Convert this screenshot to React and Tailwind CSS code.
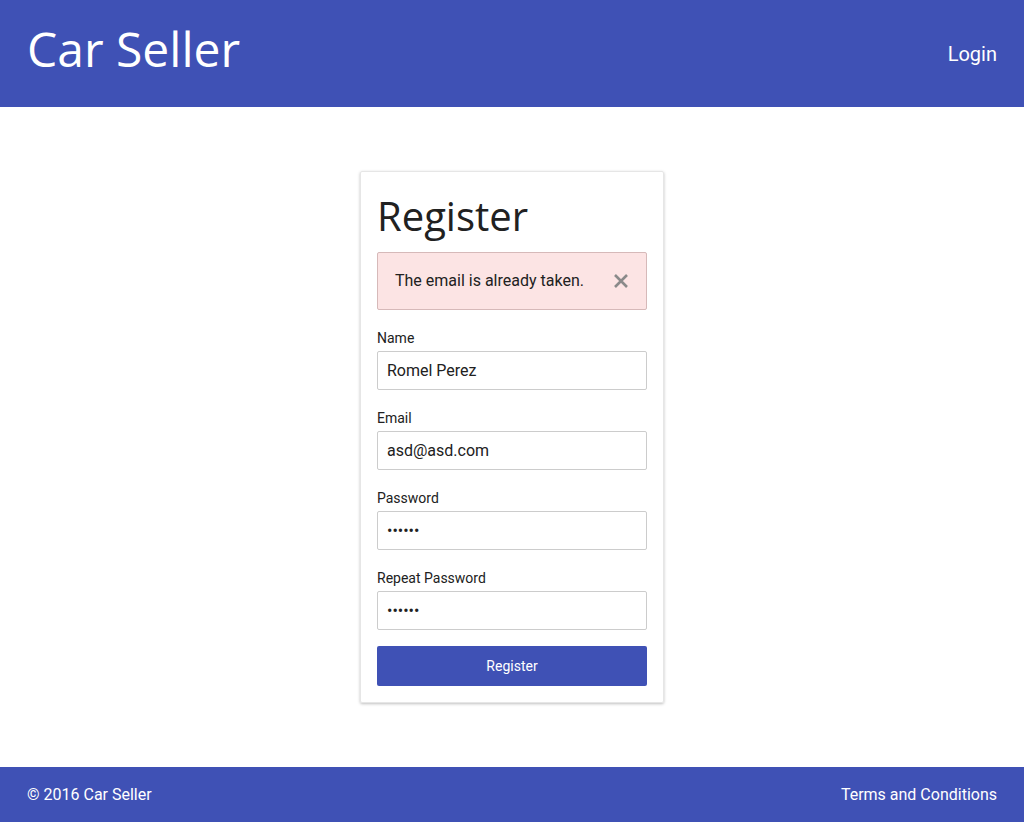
import React from 'react';

const Field = ({ label, type = 'text', value }) => (
  <div className="mt-[20px]">
    <label className="block text-[14px] leading-[16px] text-[#212121]">{label}</label>
    <input
      type={type}
      defaultValue={value}
      readOnly
      className="mt-[5px] block w-full h-[39px] border border-[#cccccc] rounded-[2px] px-[9px] text-[16px] text-[#212121] outline-none bg-white"
    />
  </div>
);

const App = () => {
  return (
    <div className="min-h-screen flex flex-col bg-white font-['Roboto',sans-serif]">
      <header className="h-[107px] bg-[#3f51b5] flex items-center justify-between px-[27px] text-white">
        <h1 className="font-['Open_Sans',sans-serif] text-[48px] leading-[normal] mb-[10px]">Car Seller</h1>
        <a className="text-[20px]">Login</a>
      </header>

      <main className="flex-1 flex justify-center py-[64px]">
        <div className="w-[304px] border border-[#e6e6e6] rounded-[2px] shadow-[0_1px_3px_rgba(0,0,0,0.25)] p-[16px]">
          <h2 className="font-['Open_Sans',sans-serif] text-[40px] leading-[normal] text-[#212121] mb-[9px]">Register</h2>

          <div className="flex items-center justify-between h-[58px] border border-[#d6b9b9] bg-[#fce4e4] rounded-[2px] pl-[17px] pr-[17px]">
            <span className="text-[16px] text-[#212121]">The email is already taken.</span>
            <svg width="16" height="16" viewBox="0 0 16 16" className="text-[#8a8a8a]">
              <path d="M2 2 L14 14 M14 2 L2 14" stroke="currentColor" strokeWidth="2.6" />
            </svg>
          </div>

          <Field label="Name" value="Romel Perez" />
          <Field label="Email" value="asd@asd.com" />
          <Field label="Password" type="password" value="123456" />
          <Field label="Repeat Password" type="password" value="123456" />

          <button className="mt-[16px] w-full h-[40px] bg-[#3f51b5] text-white text-[14px] rounded-[2px]">
            Register
          </button>
        </div>
      </main>

      <footer className="h-[55px] bg-[#3f51b5] flex items-center justify-between px-[27px] text-white text-[16px]">
        <span>© 2016 Car Seller</span>
        <a>Terms and Conditions</a>
      </footer>
    </div>
  );
};

export default App;
